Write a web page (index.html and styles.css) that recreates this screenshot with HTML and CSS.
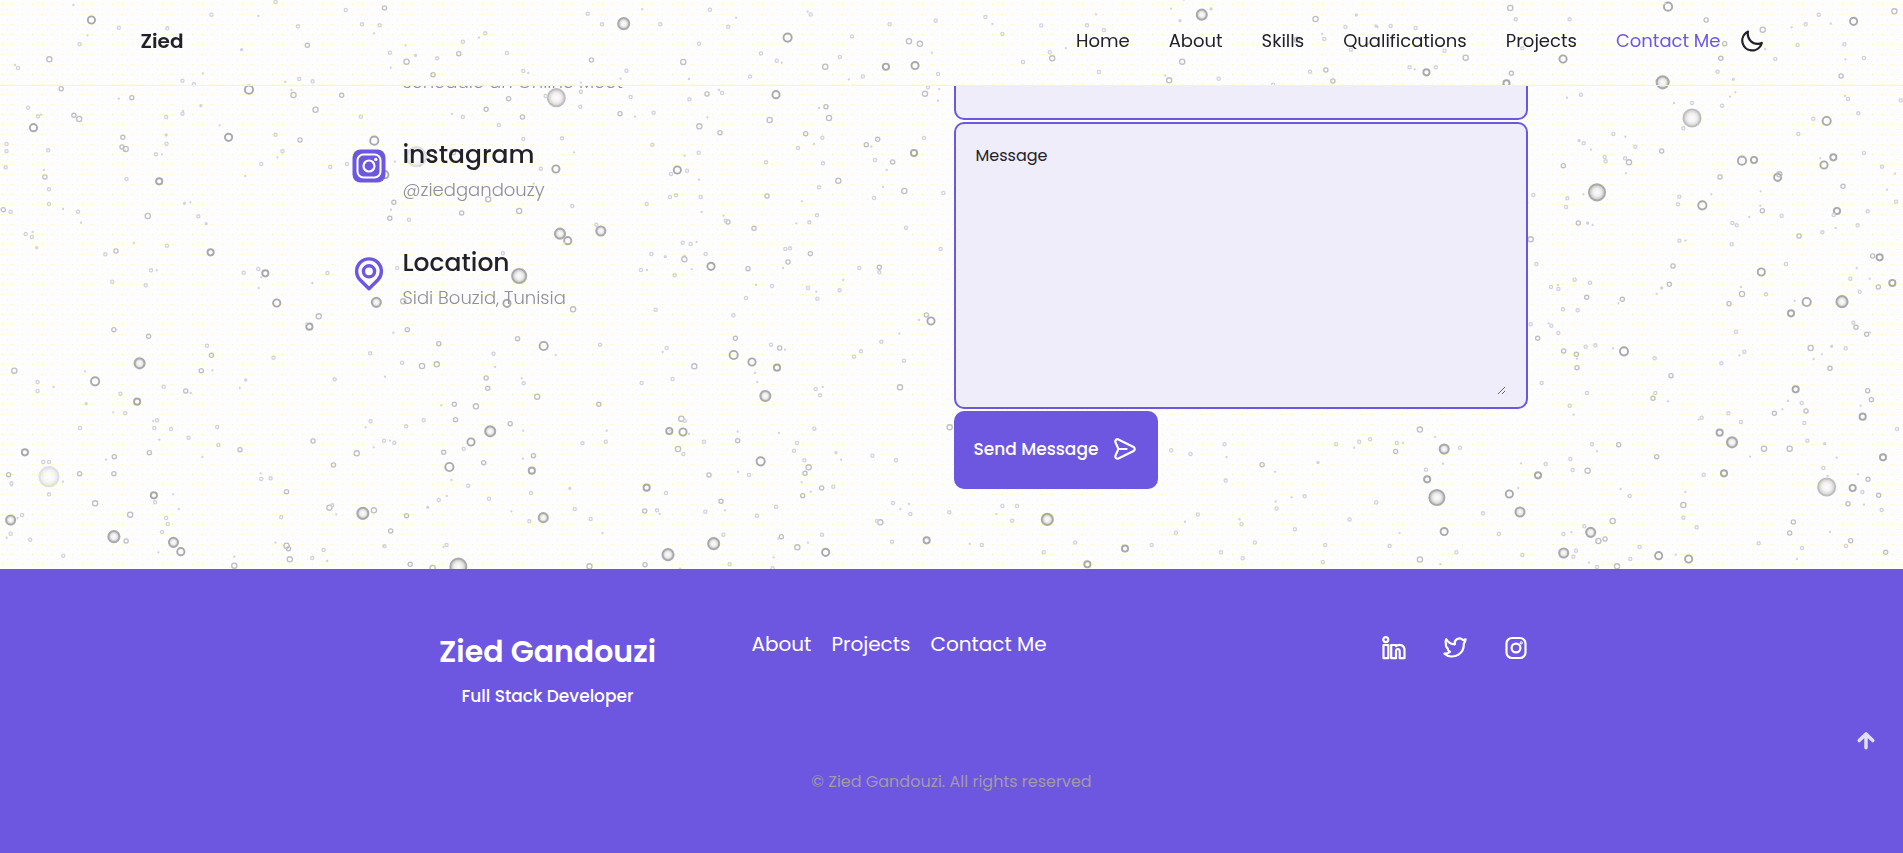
FILE: index.html
```html
<!DOCTYPE html>
<html lang="en">
<head>
<meta charset="utf-8">
<title>Zied Gandouzi</title>
<link rel="stylesheet" href="styles.css">
</head>
<body>
<svg class="bubbles" id="bubbles" aria-hidden="true">
  <defs>
    <pattern id="grain" width="10" height="10" patternUnits="userSpaceOnUse"><path d="M2 4h1v1H2zM7 9h1v1H7z" fill="#fafa9c"/></pattern>
    <radialGradient id="foam"><stop offset="0" stop-color="#fdfcff"/><stop offset=".5" stop-color="#efeeee"/><stop offset="1" stop-color="#bcbbb9"/></radialGradient>
  </defs>
  <rect width="100%" height="100%" fill="url(#grain)"/>
</svg>
<header class="header">
  <nav class="nav">
    <a class="nav-logo" href="#home">Zied</a>
    <div class="nav-menu">
      <a href="#home">Home</a>
      <a href="#about">About</a>
      <a href="#skills">Skills</a>
      <a href="#qualifications">Qualifications</a>
      <a href="#projects">Projects</a>
      <a class="active" href="#contact">Contact Me</a>
    </div>
    <button class="theme" type="button" aria-label="Toggle theme">
      <svg class="icon" viewBox="0 0 24 24"><path d="M21.64,13a1,1,0,0,0-1.05-.14,8.05,8.05,0,0,1-3.37.73A8.15,8.15,0,0,1,9.08,5.49a8.59,8.59,0,0,1,.25-2A1,1,0,0,0,8,2.36,10.14,10.14,0,1,0,22,14.05,1,1,0,0,0,21.64,13Zm-9.5,6.69A8.14,8.14,0,0,1,7.08,5.22v.27A10.15,10.15,0,0,0,17.22,15.63a9.79,9.79,0,0,0,2.1-.22A8.11,8.11,0,0,1,12.14,19.73Z"/></svg>
    </button>
  </nav>
</header>
<main class="main">
  <section class="contact" id="contact">
    <div class="info">
      <div class="info-item">
        <div class="info-icon"></div>
        <p>schedule an Online Meet</p>
      </div>
      <div class="info-item">
        <svg class="info-icon" viewBox="0 0 34 34"><rect x="0.500" y="0.500" width="33" height="33" rx="8" fill="currentColor"/><rect x="5.500" y="5.500" width="23" height="23" rx="6" fill="none" stroke="#fff" stroke-width="2"/><circle cx="17" cy="17" r="5.500" fill="none" stroke="#fff" stroke-width="2.200"/><circle cx="23.800" cy="10.400" r="1.700" fill="#fff"/></svg>
        <div><h3>instagram</h3><p>@ziedgandouzy</p></div>
      </div>
      <div class="info-item">
        <svg class="info-icon" viewBox="0 0 34 34"><path d="M17 31.800 L8.200 23 A12.400 12.400 0 1 1 25.800 23 Z" fill="none" stroke="currentColor" stroke-width="3.400" stroke-linejoin="round"/><circle cx="17" cy="14.300" r="5.600" fill="none" stroke="currentColor" stroke-width="3.400"/></svg>
        <div><h3>Location</h3><p>Sidi Bouzid, Tunisia</p></div>
      </div>
    </div>
    <form class="form">
      <div class="field"><input aria-label="Project" type="text"></div>
      <div class="field"><label for="message">Message</label><textarea id="message"></textarea></div>
      <button class="send" type="button">Send Message
        <svg class="icon" viewBox="0 0 24 24"><path d="M20.340,9.320l-14-7a3,3,0,0,0-4.080,3.900l2.400,5.370h0a1.060,1.060,0,0,1,0,.82l-2.400,5.370A3,3,0,0,0,5,22a3.140,3.140,0,0,0,1.350-.32l14-7a3,3,0,0,0,0-5.360Zm-.89,3.570-14,7a1,1,0,0,1-1.350-1.300l2.390-5.370A2,2,0,0,0,6.570,13h6.890a1,1,0,0,0,0-2H6.570a2,2,0,0,0-.08-.22L4.100,5.410a1,1,0,0,1,1.350-1.300l14,7a1,1,0,0,1,0,1.780Z"/></svg>
      </button>
    </form>
  </section>
</main>
<footer class="footer">
  <div class="footer-grid">
    <div class="brand"><h1>Zied Gandouzi</h1><p>Full Stack Developer</p></div>
    <div class="footer-links"><a href="#about">About</a><a href="#projects">Projects</a><a href="#contact">Contact Me</a></div>
    <div class="socials">
      <a href="#linkedin" aria-label="LinkedIn"><svg class="line-icon" viewBox="0 0 24 24"><circle cx="3.800" cy="3.600" r="2.500"/><path d="M1.500 9h4.800v13.200H1.500zM9.200 9H14v1.200c1-.9 2-1.300 3.400-1.300 3.400 0 5.100 2 5.100 5.600v7.700h-4.800v-6.700c0-1.600-.6-2.500-1.800-2.500s-1.900.9-1.900 2.500v6.700H9.200z"/></svg></a>
      <a href="#twitter" aria-label="Twitter"><svg class="line-icon" viewBox="0 0 24 24"><path d="M22.600 3.300c-1 .6-1.900.8-2.700.7a4.700 4.700 0 0 0-8 4.300A10 10 0 0 1 3.300 3.200c-.8 1.500-.9 3.200-.2 4.700-.3.700-.3 1.400.1 2.400.3.800.8 1.500 1.500 2-.1 1.500.7 2.700 2.300 3.500-1.500 1.400-3.300 2-5.600 1.900 3.500 3.300 9.700 3.800 14.100.9 3.900-2.600 5.500-6.700 5.300-11 .9-1 1.600-2.400 1.800-4.300z"/></svg></a>
      <a href="#instagram" aria-label="Instagram"><svg class="line-icon" viewBox="0 0 24 24"><rect x="2.500" y="2" width="19" height="20" rx="5.500"/><circle cx="12" cy="12" r="4.400"/><circle cx="17.200" cy="6.800" r=".5"/></svg></a>
    </div>
  </div>
  <p class="copy">© Zied Gandouzi. All rights reserved</p>
</footer>
<a class="scroll-up" href="#home" aria-label="Back to top"><svg class="up-icon" viewBox="0 0 24 24"><path d="M12 17V6.700M6.900 11.700L12 6.700l5.100 5"/></svg></a>
<script src="bubbles.js"></script>
</body>
</html>
```
FILE: styles.css
```css
* { box-sizing: border-box; margin: 0; padding: 0; }
:root { --purple: #6e57e0; --dark: #222127; --grey: #908f98; }
body {
  display: flex; flex-direction: column; min-height: 100vh;
  font-family: Poppins, Inter, sans-serif; font-size: 16px; color: var(--dark);
  background: #fdfcff;
}
a { color: inherit; text-decoration: none; }
button { font: inherit; border: 0; background: none; color: inherit; cursor: pointer; }
.icon { width: 26px; height: 26px; fill: currentColor; display: block; }
.bubbles { position: fixed; inset: 0; width: 100%; height: 100%; z-index: -1; }
.header { border-bottom: 1px solid #f1f0f4; flex: none; }
.nav { display: flex; align-items: center; max-width: 1626px; height: 85px; margin: 0 auto; padding: 0 0 4px 2px; font-size: 18px; }
.nav-logo { font-size: 20px; font-weight: 600; margin-right: auto; }
.nav-menu { display: flex; gap: 39px; }
.active { color: var(--purple); }
.theme { margin-left: 18px; }
.main { flex: none; height: calc(100vh - 370px); overflow: hidden; display: flex; flex-direction: column; justify-content: flex-end; }
.contact { display: grid; grid-template-columns: minmax(0, 1fr) 574px; width: 100%; max-width: 1200px; margin: 0 auto; padding: 0 24px 80px 0; }
.info { display: flex; flex-direction: column; gap: 41px; padding-top: 23px; }
.info-item { display: flex; align-items: flex-start; gap: 17px; }
svg.info-icon { height: 34px; margin-top: 12px; }
.info-icon { width: 34px; color: var(--purple); }
.info h3 { font-size: 25px; font-weight: 500; line-height: 36px; }
.info p { color: var(--grey); font-size: 18px; font-weight: 300; line-height: 28px; padding-top: 3px; box-sizing: content-box; }
.form { display: flex; flex-direction: column; align-items: flex-start; gap: 2px; }
.field { display: flex; flex-direction: column; width: 100%; padding: 18px 20px 12px; border: 2px solid var(--purple); border-radius: 10px; background: #f0edfb; }
.field label { line-height: 28px; }
.field input, .field textarea { width: 100%; border: 0; outline: 0; background: none; font: inherit; }
.field input { height: 44px; }
.field textarea { height: 225px; resize: vertical; display: block; }
.send { display: flex; align-items: center; gap: 14px; height: 78px; padding: 0 20px 2px; border-radius: 10px; background: var(--purple); color: #fff; font-size: 17px; font-weight: 500; }
.footer { flex: 1; background: var(--purple); color: #fff; padding-top: 60px; }
.footer-grid { display: grid; grid-template-columns: 392px 1fr auto; column-gap: 8px; max-width: 1200px; margin: 0 auto; padding-right: 24px; }
.brand { text-align: center; }
.brand h1 { font-size: 30px; line-height: 46px; font-weight: 600; }
.brand p { font-size: 17px; font-weight: 500; line-height: 28px; padding-top: 7px; box-sizing: content-box; }
.footer-links { display: flex; gap: 20px; font-size: 20px; line-height: 30px; }
.socials { display: flex; gap: 37px; padding-top: 7px; }
.line-icon { width: 24px; height: 24px; display: block; fill: none; stroke: currentColor; stroke-width: 2.2; stroke-linejoin: round; }
.copy { color: #a09aab; text-align: center; line-height: 24px; padding-top: 60px; }
.scroll-up { position: fixed; right: 21px; bottom: 96px; color: #e2dff7; }
.up-icon { width: 32px; height: 32px; display: block; fill: none; stroke: currentColor; stroke-width: 2.6; stroke-linecap: round; stroke-linejoin: round; }
```
FILE: bubbles.js
```js
// Bubble field, grouped in tiles: origin, units per pixel, then x, y, radius (px).
const tiles = [
  { x: 0, y: 0, ux: 2.45, uy: 3, d: [224,60,4,121,178,3,291,83,2,195,133,2,410,85,2,518,44,2,44,204,2,730,79,2,753,136,2.5,733,237,2,766,244,2,847,30,2,887,73,2,930,76,2,942,24,2.5,955,158,2,996,185,3,1061,224,2.5,1018,166,1,1071,175,2,1124,161,2.5,1134,125,2,1189,100,2,1242,159,2,1282,213,2,1449,180,2.5,1528,71,6,1535,212,2,1440,41,2,1475,73,2,675,6,2,592,149,1,447,242,2,475,253,2,150,266,2.5,610,269,4.5,719,285,3,837,286,2.5,773,329,3,323,293,2.5,181,346,2.5,194,357,3,69,323,2,93,349,2,82,383,4,301,412,2.5,308,447,3,299,441,2.5,560,412,4,492,317,1,447,341,2,407,351,2,407,405,1,408,431,2,382,463,2,675,404,2,735,420,2.5,692,454,2,884,350,2,917,422,4.5,640,492,2,809,501,2,850,492,2,943,524,4,390,544,3.5,310,537,2,110,531,2.5,16,432,2,16,454,2,14,502,2,118,451,2,120,568,2,120,612,2,8,629,2.5,26,635,2,191,635,2,362,648,3,452,610,1,486,649,2,505,671,1,409,737,2,284,753,2.5,516,757,3.5,258,763,2,63,702,2,78,711,2,90,743,1,650,820,3.5,597,818,2,633,807,2,802,819,2,370,811,2,275,845,2,357,856,2,1363,293,9,1337,288,2,1423,275,2,1246,296,2.5,1191,328,2.5,1134,351,2,1280,351,2.5,1422,320,2,1519,341,2.5,1545,291,2,1222,375,2,1020,470,10,1362,507,4,1110,457,3,1325,506,2,965,607,2.5,955,655,2.5,1002,659,2,1131,639,2.5,1272,633,3,1196,598,3,1402,618,2,1372,701,5.5,1391,722,4,1472,693,5,1461,674,2,1232,760,2,1272,828,7.5,973,804,2,1377,415,2,1282,417,2] },
  { x: 0, y: 290, ux: 2.45, uy: 3, d: [678,39,4,922,37,5,988,34,3,1242,40,4,1404,58,3,781,79,3,758,110,3.5,279,119,2.5,364,139,2.5,998,119,2.5,1268,146,2.5,1075,161,2.5,1332,168,4.5,1470,164,2,507,167,2,518,196,2.5,670,203,2,342,220,5.5,233,274,4.5,35,242,3,92,276,2,92,303,2,295,311,2,336,335,3.5,455,303,2.5,401,290,2,493,242,2.5,602,270,1,820,268,2,907,190,2,985,218,2,1034,228,3,1070,223,3,1191,264,2.5,1195,295,2.5,1316,320,3,1283,280,2,1209,191,2,1467,343,2.5,1113,343,2.5,1166,349,3,1116,389,2.5,1250,401,2.5,1201,424,5.5,1154,456,4,1101,531,4.5,1087,487,2.5,1185,518,2.5,1303,542,3.5,1307,497,2.5,1136,476,2,874,490,3,817,525,2.5,767,453,2.5,941,452,2,966,458,2,995,409,2,908,394,2,1038,391,2,588,479,2.5,535,465,2,462,443,2,532,411,2,366,488,2.5,280,500,2.5,196,414,2,378,414,2,385,391,2,419,417,2,307,370,2,211,341,1,61,487,3.5,120,560,10,106,516,2,120,516,2,21,554,2.5,28,580,2,195,551,2.5,279,551,2.5,120,613,2,377,616,3.5,380,637,2,233,640,3,319,674,3,26,690,5,54,675,2,74,749,2,26,731,2,279,740,6,309,753,2.5,425,757,5,443,785,4,397,726,2,411,702,2,407,684,2,155,797,2,574,827,3,702,605,2.5,689,682,2,702,767,3,707,776,2.5,710,808,3,765,804,2,793,780,2,807,653,3,814,646,2,889,670,6,916,661,3,957,723,2.5,996,677,2.5,1331,683,5,1297,694,2,1301,609,2,1198,626,2,1075,630,2,1048,652,1,1147,587,2,1094,765,2,942,769,2,1005,823,2.5,1123,830,8.5,1060,834,3,1444,829,3,1447,687,2,1408,657,2,1427,460,2,1484,455,2,1396,595,1,640,567,2,663,565,2] },
  { x: 640, y: 80, ux: 3, uy: 3, d: [201,42,2.5,408,44,4,389,120,3,178,139,3,240,158,2.5,148,58,2,246,39,2,41,98,2,37,194,2,176,218,2,112,270,4,93,282,2,141,272,2,90,351,2,108,346,2,182,351,2,20,372,2,558,80,2.5,567,114,3,497,161,2.5,547,173,2,474,204,2,378,247,2,549,250,2,679,194,2.5,713,178,2.5,822,219,3.5,758,246,2.5,705,240,2,595,302,3,537,322,2,793,333,3,910,339,2,702,354,2,381,348,2.5,264,426,2.5,257,422,2,342,445,2.5,531,406,2,508,427,2,798,443,2,902,507,2,855,41,3,864,22,2,852,174,2,128,488,2,152,492,2,133,538,3,197,522,2,213,559,4,324,566,2.5,104,586,2,34,522,2,76,530,1,3,570,2,436,507,2,450,505,2,444,546,2.5,511,521,2.5,718,562,2.5,658,564,2,718,577,2,396,618,2,318,654,2,504,624,2,599,631,2,532,656,2,47,689,2,859,705,2.5,873,723,4,280,706,2,286,775,2.5,393,794,2,419,804,2.5,281,825,4.5,336,846,4,411,863,3.5,163,859,3,376,948,5.5,642,830,2,663,814,2,724,785,2,792,842,2,780,922,3,527,927,2,540,946,2,98,897,2,80,804,2,5,909,2,124,1016,3,134,1022,2,88,1053,3.5,129,1056,4,114,1107,3,130,1122,2,192,1085,2,293,1082,2.5,362,1144,4.5,207,1185,2.5,327,1185,2,20,1223,3.5,78,1239,2,14,1293,2.5,51,1291,2,196,1295,2,243,1264,2.5,351,1307,2,408,1280,2,506,1162,3,495,1180,2.5,493,1141,2,471,1089,2,462,1112,2,523,1046,2,488,1247,2.5,545,1224,2.5,580,1220,2,424,1370,2.5,472,1402,3,557,1417,4,546,1364,2,221,1391,6,250,1364,2,84,1424,6,15,1454,2.5,269,1453,2,398,1465,2,721,1327,3,711,1323,2,811,1302,2,860,1381,3.5,756,1385,2,759,1269,2,768,1141,2,697,1127,2,588,1118,1,929,1042,3,928,1297,2] },
  { x: 1480, y: 90, ux: 3, uy: 3, d: [636,84,9,636,39,2,610,115,2,726,47,2,1040,93,4.5,1000,86,2,1104,27,2,1135,70,2,1262,31,2,303,14,2,400,132,2,311,160,2,297,152,1,250,227,2.5,447,217,3,435,205,2,377,214,2,374,201,2,466,170,2,545,183,2.5,351,307,8.5,262,325,2,258,351,2,295,399,2.5,323,399,1,152,448,3,169,522,2,160,315,2,786,212,4.5,822,210,3.5,893,262,4,898,253,3,720,261,2.5,667,346,4.5,598,320,2,594,343,2,847,362,2.5,905,377,2,955,132,2,1060,202,3.5,1032,225,4,1152,189,2,1206,230,2,1089,289,2.5,1071,363,3.5,1061,375,2,1163,364,2,1133,406,2,1248,335,2,957,438,2.5,1027,427,2,757,399,2,770,406,2,755,463,2,598,452,2,579,528,2.5,568,583,2.5,545,594,1,844,546,4,918,522,2,1178,498,2.5,1199,502,3.5,1111,566,2,1139,605,2,1195,591,2.5,1237,579,3.5,786,612,3,747,641,2.5,858,613,2,980,636,4.5,933,670,3.5,1086,635,6,1128,712,2.5,1120,698,2,1160,733,2.5,992,774,3,1055,769,1,1097,775,2,1050,835,2.5,768,725,2,793,785,2,724,820,2,284,569,2,330,578,2,213,591,2,235,597,2,320,622,2.5,427,628,2.5,249,658,2,293,661,2,152,703,2,214,707,2,235,729,2,173,745,2.5,251,783,2.5,289,793,2.5,291,833,2.5,317,770,2,346,766,2,432,784,4.5,524,805,2,573,857,2.5,519,925,2.5,526,909,2,321,909,2,269,947,2,185,879,2,947,898,3.5,1163,902,2.5,1174,929,2.5,1148,980,3.5,978,963,2.5,965,939,2,973,999,2,883,970,2.5,745,970,2,783,996,2,665,983,2,719,1028,3.5,756,1057,5.5,852,1076,3,929,1076,3,982,1052,2,1034,1061,1,1251,1017,2,1209,1102,3.5,1040,1191,9,1030,1134,2,1118,1194,3.5,1164,1168,2.5,1147,1206,2,1196,1216,2.5,1104,1241,2.5,1205,1260,2,416,1064,2.5,336,1063,2,530,1100,2.5,271,1107,2,197,1122,2,278,1140,2,323,1142,3,174,1156,3.5,732,1150,3.5,671,1154,2,88,1212,4,120,1266,5,332,1327,5,355,1353,3,375,1347,2.5,398,1293,3,313,1309,2,250,1332,2,251,1389,5,288,1382,2,280,1400,2,127,1395,2,610,1245,3,610,1283,2,650,1312,2,449,1218,2,479,1371,2,451,1407,2,536,1397,4,626,1407,4,411,1429,3,351,1431,2,940,1296,2.5,929,1329,2.5,966,1374,2,836,1360,2,1112,1352,2.5,1098,1368,2,1217,1387,2.5] },
  { x: 1050, y: 0, ux: 1.838, uy: 3, d: [279,44,5.5,296,27,1,488,57,3,846,24,3,856,58,2,955,58,2,1136,20,4.5,1206,60,2.5,1310,89,3,1389,73,2,1477,64,4,1552,34,3,1413,44,2,1240,131,2.5,1374,135,2,1460,133,2,1496,174,2,1233,175,2.5,1333,177,2,943,177,4,764,173,3,725,152,2,692,217,3.5,709,202,2,661,202,2,478,215,2,507,210,2.5,520,243,2.5,310,236,2,219,241,3,243,185,3,90,216,2,4,175,3,68,76,2,99,90,2,454,119,3,504,117,2,543,81,2,599,78,1,626,78,2,672,84,2,848,220,2.5,839,250,3.5,1126,247,6.5,1227,215,2,1256,238,1,1454,228,2.5,410,254,2,239,62,1,563,45,1,868,145,2,553,149,2] },
  { x: 0, y: 0, ux: 0.824, uy: 0.824, d: [544,20,2,563,51,3,585,8,2,600,22,2,627,44,2,649,31,4.5,668,12,2,680,55,3,702,30,2,711,63,2,733,20,2,749,34,3,758,36,3,730,55,3.5,754,54,4,773,61,2,771,17,2,812,14,2,826,28,2,843,51,2,858,21,2,865,43,2,576,36,2,618,63,2,640,50,2,692,47,2,863,428,6,826,417,2,834,429,2,838,417,2,896,465,3.5,927,452,3.5,949,449,2,969,439,2,987,424,2,1006,455,2,1023,432,2,1034,447,2,1067,436,2,1075,409,2,1092,449,2,1112,428,2,1040,383,2.5,965,371,2,981,374,2,1009,366,2,1024,460,2,1184,410,8,1190,370,5,1190,438,4,1203,369,2,1175,387,2,1176,395,3.5,1150,372,2.5,1151,365,2,1101,366,2,1086,381,1,1120,364,2,1129,362,2,1170,354,3,1200,455,2,1222,423,2,1235,440,2,1145,450,2,1134,414,2,1010,396,2,1052,419,2,886,447,2,860,455,2,809,449,2,1170,461,3,1090,463,2] }
];
const ns = 'http://www.w3.org/2000/svg';
const field = document.getElementById('bubbles');
function ring(x, y, r) {
  const c = document.createElementNS(ns, 'circle');
  c.setAttribute('cx', x);
  c.setAttribute('cy', y);
  c.setAttribute('r', r);
  c.setAttribute('fill', r > 4.5 ? 'url(#foam)' : r < 1.5 ? '#dcdbf2' : 'none');
  c.setAttribute('stroke', r > 3 ? '#a9a9aa' : r > 2 ? '#bfbfc2' : '#d2d2d9');
  c.setAttribute('stroke-width', r > 3 ? 1.9 : 1.3);
  c.setAttribute('opacity', r > 9 ? 0.35 : r > 8.2 ? 0.75 : 1);
  field.appendChild(c);
}
for (const t of tiles) {
  for (let i = 0; i < t.d.length; i += 3) {
    const x = t.x + t.d[i] / t.ux, y = t.y + t.d[i + 1] / t.uy;
    ring(x, y, Math.max(1, t.d[i + 2] - 0.4));
    if (i % 9 === 0) {
      ring(x + (i * 7) % 37 - 18, y + (i * 11) % 31 - 15, 0.5);
    }
  }
}
```
